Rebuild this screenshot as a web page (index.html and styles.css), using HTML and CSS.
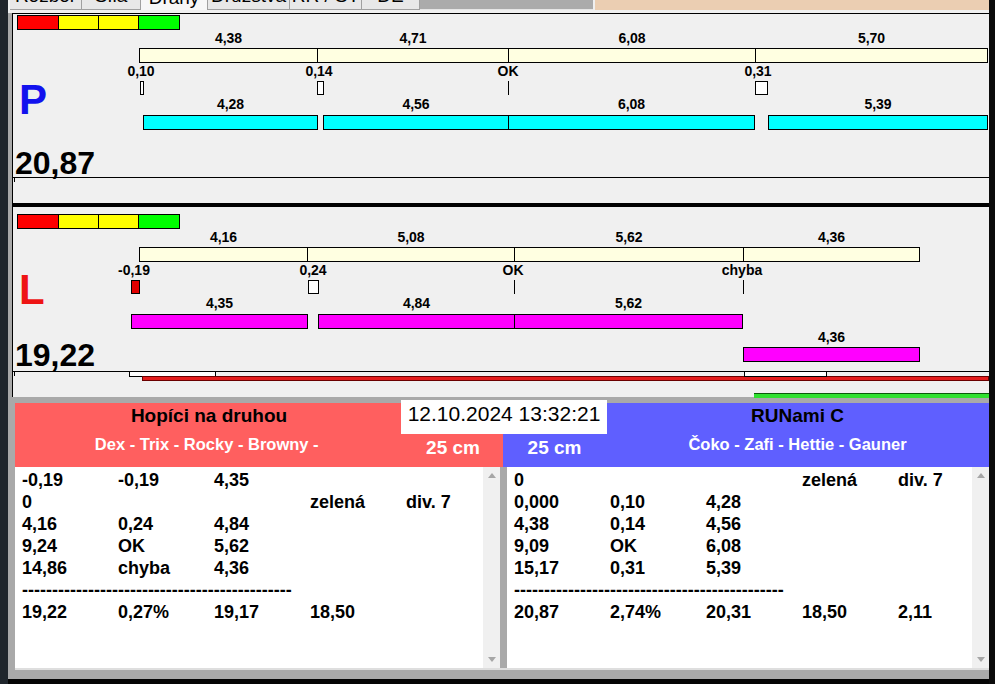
FILE: index.html
```html
<!DOCTYPE html>
<html lang="cs">
<head>
<meta charset="utf-8">
<title>Dráhy</title>
<link rel="stylesheet" href="styles.css">
</head>
<body>
<div class="screen">
  <div class="edge-left"></div>
  <div class="window">
    <div class="tabbar">
      <div class="tabs">
        <div class="tab w-rozbor"><span>Rozbor</span></div>
        <div class="tab w-sila"><span>Síla</span></div>
        <div class="tab active w-drahy"><span>Dráhy</span></div>
        <div class="tab w-druzstva"><span>Družstva</span></div>
        <div class="tab w-rr"><span>RR / ST</span></div>
        <div class="tab w-de"><span>DE</span></div>
      </div>
      <div class="tab-fill"></div>
      <div class="tab-peach"></div>
    </div>

    <div class="lanes">
      <section class="lane lane-p">
        <div class="legend"><span class="r"></span><span class="y"></span><span class="y"></span><span class="g"></span></div>
        <div class="lane-body">
          <div class="lane-side">
            <div class="lane-letter">P</div>
            <div class="lane-total">20,87</div>
          </div>
          <div class="chart">
            <span class="lbl r-a" style="left:8px;width:179px">4,38</span>
            <span class="lbl r-a" style="left:186px;width:192px">4,71</span>
            <span class="lbl r-a" style="left:377px;width:248px">6,08</span>
            <span class="lbl r-a" style="left:624px;width:233px">5,70</span>
            <span class="seg cream r-bar1" style="left:8px;width:179px"></span>
            <span class="seg cream r-bar1" style="left:186px;width:192px"></span>
            <span class="seg cream r-bar1" style="left:377px;width:248px"></span>
            <span class="seg cream r-bar1" style="left:624px;width:233px"></span>
            <span class="lbl r-b" style="left:-20px;width:60px">0,10</span>
            <span class="lbl r-b" style="left:158px;width:60px">0,14</span>
            <span class="lbl r-b" style="left:347px;width:60px">OK</span>
            <span class="lbl r-b" style="left:597px;width:60px">0,31</span>
            <span class="mk" style="left:9px;width:4px"></span>
            <span class="mk" style="left:186px;width:7px"></span>
            <span class="vl" style="left:377px"></span>
            <span class="mk" style="left:624px;width:13px"></span>
            <span class="lbl r-c" style="left:12px;width:175px">4,28</span>
            <span class="lbl r-c" style="left:192px;width:186px">4,56</span>
            <span class="lbl r-c" style="left:377px;width:247px">6,08</span>
            <span class="lbl r-c" style="left:637px;width:220px">5,39</span>
            <span class="seg cyan r-bar2" style="left:12px;width:175px"></span>
            <span class="seg cyan r-bar2" style="left:192px;width:186px"></span>
            <span class="seg cyan r-bar2" style="left:377px;width:247px"></span>
            <span class="seg cyan r-bar2" style="left:637px;width:220px"></span>
          </div>
        </div>
        <div class="axis"><span class="tick"></span></div>
      </section>

      <div class="lane-sep"></div>

      <section class="lane lane-l">
        <div class="legend"><span class="r"></span><span class="y"></span><span class="y"></span><span class="g"></span></div>
        <div class="lane-body">
          <div class="lane-side">
            <div class="lane-letter">L</div>
            <div class="lane-total">19,22</div>
          </div>
          <div class="chart">
            <span class="lbl r-a" style="left:8px;width:169px">4,16</span>
            <span class="lbl r-a" style="left:176px;width:208px">5,08</span>
            <span class="lbl r-a" style="left:383px;width:230px">5,62</span>
            <span class="lbl r-a" style="left:612px;width:177px">4,36</span>
            <span class="seg cream r-bar1" style="left:8px;width:169px"></span>
            <span class="seg cream r-bar1" style="left:176px;width:208px"></span>
            <span class="seg cream r-bar1" style="left:383px;width:230px"></span>
            <span class="seg cream r-bar1" style="left:612px;width:177px"></span>
            <span class="lbl r-b" style="left:-27px;width:60px">-0,19</span>
            <span class="lbl r-b" style="left:152px;width:60px">0,24</span>
            <span class="lbl r-b" style="left:352px;width:60px">OK</span>
            <span class="lbl r-b" style="left:581px;width:60px">chyba</span>
            <span class="mk neg" style="left:0;width:9px"></span>
            <span class="mk" style="left:177px;width:11px"></span>
            <span class="vl" style="left:383px"></span>
            <span class="vl" style="left:612px"></span>
            <span class="lbl r-c" style="left:0;width:177px">4,35</span>
            <span class="lbl r-c" style="left:187px;width:197px">4,84</span>
            <span class="lbl r-c" style="left:383px;width:229px">5,62</span>
            <span class="seg mag r-bar2" style="left:0;width:177px"></span>
            <span class="seg mag r-bar2" style="left:187px;width:197px"></span>
            <span class="seg mag r-bar2" style="left:383px;width:229px"></span>
            <span class="lbl r-d" style="left:612px;width:177px">4,36</span>
            <span class="seg mag r-bar3" style="left:612px;width:177px"></span>
          </div>
        </div>
        <div class="axis">
          <span class="tick"></span>
          <span class="gap-box" style="left:116px;width:87px"></span>
          <span class="late-bar" style="left:129px"></span>
          <span class="gap-box" style="left:731px;width:83px"></span>
          <span class="ok-bar" style="left:741px"></span>
        </div>
      </section>
    </div>

    <div class="results">
      <div class="stamp">12.10.2024 13:32:21</div>
      <div class="heads">
        <div class="head head-red">
          <div class="head-main">
            <div class="team">Hopíci na druhou</div>
            <div class="members">Dex - Trix - Rocky - Browny -&nbsp;</div>
          </div>
          <div class="head-cm">25 cm</div>
        </div>
        <div class="head head-blue">
          <div class="head-cm">25 cm</div>
          <div class="head-main">
            <div class="team">RUNami C</div>
            <div class="members">Čoko - Zafi - Hettie - Gauner</div>
          </div>
        </div>
      </div>
      <div class="lists">
        <div class="list list-left">
          <div class="rows">
            <span>-0,19</span><span>-0,19</span><span>4,35</span><span></span><span></span>
            <span>0</span><span></span><span></span><span>zelená</span><span>div. 7</span>
            <span>4,16</span><span>0,24</span><span>4,84</span><span></span><span></span>
            <span>9,24</span><span>OK</span><span>5,62</span><span></span><span></span>
            <span>14,86</span><span>chyba</span><span>4,36</span><span></span><span></span>
            <span class="dash">---------------------------------------------</span>
            <span>19,22</span><span>0,27%</span><span>19,17</span><span>18,50</span><span></span>
          </div>
          <div class="scroll"><span class="arr up"></span><span class="arr down"></span></div>
        </div>
        <div class="list list-right">
          <div class="rows">
            <span>0</span><span></span><span></span><span>zelená</span><span>div. 7</span>
            <span>0,000</span><span>0,10</span><span>4,28</span><span></span><span></span>
            <span>4,38</span><span>0,14</span><span>4,56</span><span></span><span></span>
            <span>9,09</span><span>OK</span><span>6,08</span><span></span><span></span>
            <span>15,17</span><span>0,31</span><span>5,39</span><span></span><span></span>
            <span class="dash">---------------------------------------------</span>
            <span>20,87</span><span>2,74%</span><span>20,31</span><span>18,50</span><span>2,11</span>
          </div>
          <div class="scroll"><span class="arr up"></span><span class="arr down"></span></div>
        </div>
      </div>
    </div>
  </div>
  <div class="edge-right"></div>
</div>
</body>
</html>
```

FILE: styles.css
```css
* { box-sizing: border-box; margin: 0; padding: 0; }
html, body { width: 995px; height: 684px; overflow: hidden; }
body { background: #050505; font-family: "Liberation Sans", Arial, sans-serif; color: #000; }

.screen { display: flex; width: 995px; height: 684px; }
.edge-left { width: 8px; flex: none; background: #20262c; }
.edge-right { flex: 1; background: #0b0b0b; }
.window { width: 981px; height: 679px; flex: none; background: #a9a9a9; overflow: hidden; display: flex; flex-direction: column; }

/* tabs */
.tabbar { height: 13px; flex: none; display: flex; background: #f0f0f0; padding-left: 2px; }
.tabs { display: flex; height: 10px; }
.tab { height: 10px; overflow: hidden; background: #e8e8e8; border-right: 1px solid #a0a0a0; border-bottom: 1px solid #a0a0a0; font-size: 19px; line-height: 19px; text-align: center; color: #000; }
.tab span { display: block; margin-top: -14px; }
.tab.active { background: #f7f7f7; border-bottom: 0; }
.tab.active span { margin-top: -12px; }
.w-rozbor { width: 72px; }
.w-sila { width: 59px; }
.w-drahy { width: 67px; }
.w-druzstva { width: 82px; }
.w-rr { width: 72px; }
.w-de { width: 58px; }
.tab-fill { width: 173px; height: 10px; background: #ababab; border-bottom: 1px solid #e6e6e6; }
.tab-peach { flex: 1; height: 10px; margin-left: 2px; background: #ebceb2; }

/* lanes */
.lanes { margin-left: 4px; width: 977px; flex: none; }
.lane { height: 190px; border-left: 1px solid #000; background: #f0f0f0; display: flex; flex-direction: column; }
.lane-p { border-top: 1px solid #000; }
.lane-sep { height: 4px; background: #000; }

.legend { display: flex; width: max-content; height: 15px; flex: none; margin: 1px 0 0 4px; border: 1px solid #000; }
.lane-l .legend { margin-top: 7px; }
.legend span { height: 13px; }
.legend .r { width: 40px; background: #ff0000; }
.legend .y { width: 40px; background: #ffff00; border-left: 1px solid #000; }
.legend .g { width: 41px; background: #00ff00; border-left: 1px solid #000; }

.lane-body { display: flex; height: 147px; flex: none; }
.lane-l .lane-body { height: 142px; }
.lane-side { width: 118px; flex: none; display: flex; flex-direction: column; }
.lane-letter { margin: 49px 0 0 6px; font-size: 42px; line-height: 42px; font-weight: bold; }
.lane-p .lane-letter { color: #1212ee; }
.lane-l .lane-letter { color: #ee1414; margin-top: 40px; }
.lane-total { margin-top: auto; padding-left: 2px; font-size: 32px; line-height: 28px; font-weight: bold; }
.lane-l .lane-total { margin-bottom: 2px; }

.chart { position: relative; flex: 1; }
.seg { position: absolute; height: 15px; border: 1px solid #000; }
.cream { background: #ffffe1; }
.cyan { background: #00ffff; }
.mag { background: #ff00ff; }
.lbl { position: absolute; font-size: 14px; line-height: 16px; font-weight: bold; text-align: center; white-space: nowrap; }
.r-a { top: 0; }
.r-bar1 { top: 18px; }
.r-b { top: 33px; }
.r-c { top: 66px; }
.r-bar2 { top: 85px; }
.r-d { top: 100px; }
.r-bar3 { top: 118px; }
.mk { position: absolute; top: 51px; height: 14px; border: 1px solid #000; background: #fff; }
.mk.neg { background: #e00000; }
.vl { position: absolute; top: 51px; width: 1px; height: 14px; background: #000; }

.axis { position: relative; height: 26px; flex: none; border-top: 1px solid #000; }
.tick { position: absolute; left: 1px; top: 0; width: 1px; height: 4px; background: #000; }
.gap-box { position: absolute; top: -1px; height: 6px; border: 1px solid #000; background: #fff; }
.late-bar { position: absolute; top: 4px; right: 0; height: 5px; background: #e41c1c; border: 1px solid #6a0000; }
.ok-bar { position: absolute; top: 21px; right: 0; height: 5px; background: #2fe02f; border-top: 1px solid #0a5a0a; }

/* results */
.results { position: relative; flex: 1; padding: 6px 0 0 7px; }
.stamp { position: absolute; left: 393px; top: 3px; width: 206px; height: 34px; background: #fff; font-size: 21px; line-height: 28px; text-align: center; color: #000; }
.heads { display: flex; height: 64px; }
.head { display: flex; }
.head-red { width: 488px; background: #ff5f5f; }
.head-blue { width: 486px; background: #5f5fff; }
.head-main { flex: 1; padding-top: 2px; text-align: center; }
.team { font-size: 19px; line-height: 22px; font-weight: bold; color: #000; }
.members { margin-top: 7px; font-size: 16.5px; line-height: 20px; font-weight: bold; color: #fff; white-space: pre; }
.head-cm { padding-top: 34px; text-align: center; font-size: 19px; line-height: 22px; font-weight: bold; color: #fff; }
.head-red .head-cm { width: 100px; }
.head-blue .head-cm { width: 103px; }

.lists { display: flex; gap: 7px; height: 201px; border-bottom: 2px solid #dedede; box-sizing: content-box; }
.list { display: flex; background: #fff; overflow: hidden; }
.list-left { width: 485px; }
.list-right { width: 482px; }
.rows { flex: 1; min-width: 0; overflow: hidden; display: grid; grid-template-columns: repeat(5, 96px); grid-auto-rows: 22px; align-content: start; padding: 2px 0 0 7px; font-size: 18px; line-height: 22px; font-weight: bold; white-space: nowrap; }
.dash { grid-column: 1 / -1; }
.scroll { width: 17px; flex: none; background: #f0f0f0; display: flex; flex-direction: column; justify-content: space-between; align-items: center; padding: 6px 0 6px; }
.arr { width: 0; height: 0; border-left: 4px solid transparent; border-right: 4px solid transparent; }
.up { border-bottom: 5px solid #a6a6a6; }
.down { border-top: 5px solid #a6a6a6; }
```
